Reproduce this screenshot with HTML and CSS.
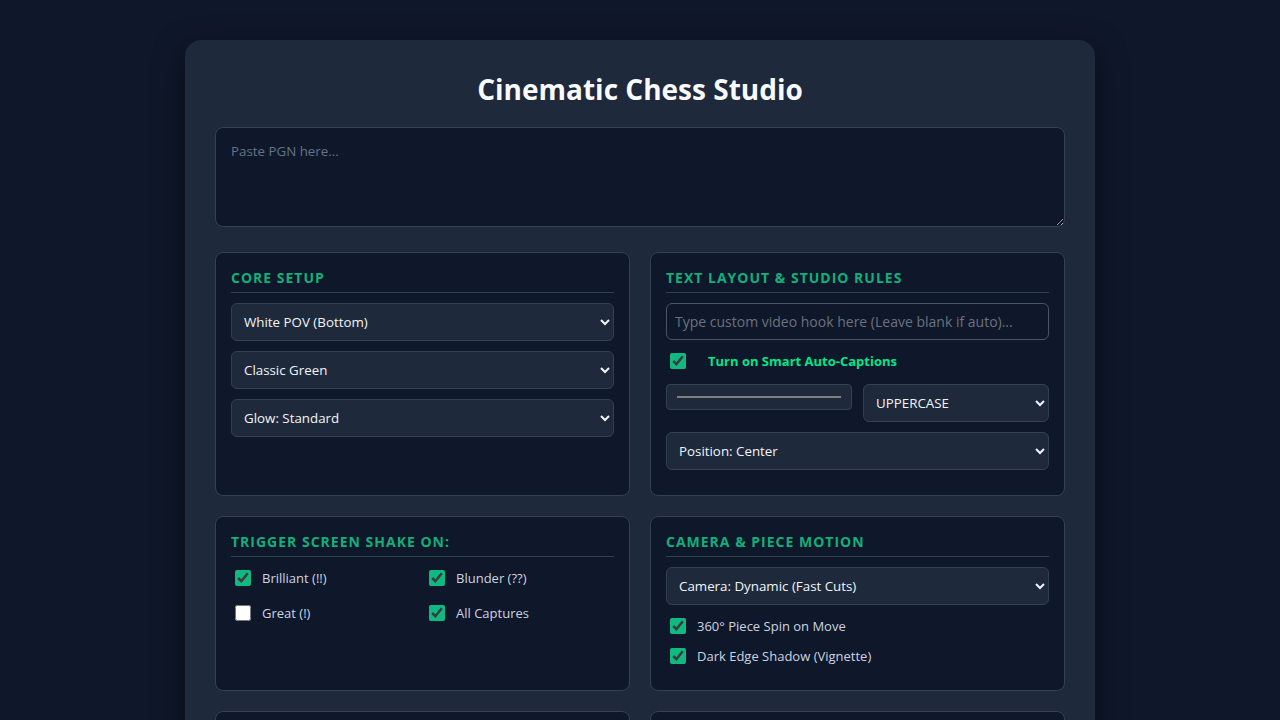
FILE: index.html
```html
<!DOCTYPE html>
<html lang="en">
<head>
  <meta charset="UTF-8" />
  <meta name="viewport" content="width=device-width, initial-scale=1.0"/>
  <title>Cinematic Chess Studio</title>
  <link rel="stylesheet" href="styles.css">
</head>
<body>
  <div class="studio">
    <h1>Cinematic Chess Studio</h1>
    <textarea class="pgn-input" placeholder="Paste PGN here..."></textarea>

    <div class="panel-grid">
      <!-- Core setup -->
      <div class="panel">
        <h3 class="panel-title">Core Setup</h3>
        <select class="field">
          <option>White POV (Bottom)</option>
          <option>Black POV (Bottom)</option>
        </select>
        <select class="field">
          <option>Classic Green</option>
          <option>Walnut Wood</option>
          <option>Midnight Blue</option>
        </select>
        <select class="field">
          <option>Glow: Standard</option>
          <option>Glow: Intense</option>
          <option>Glow: Off</option>
        </select>
      </div>

      <!-- Text layout -->
      <div class="panel">
        <h3 class="panel-title">Text Layout &amp; Studio Rules</h3>
        <input type="text" class="hook-input" placeholder="Type custom video hook here (Leave blank if auto)...">
        <label class="caption-toggle">
          <input type="checkbox" checked>
          <span>Turn on Smart Auto-Captions</span>
        </label>
        <div class="field-row">
          <div class="color-field"><span class="color-swatch"></span></div>
          <select class="field">
            <option>UPPERCASE</option>
            <option>Sentence case</option>
          </select>
        </div>
        <select class="field">
          <option>Position: Center</option>
          <option>Position: Top</option>
          <option>Position: Bottom</option>
        </select>
      </div>

      <!-- Screen shake -->
      <div class="panel">
        <h3 class="panel-title">Trigger Screen Shake On:</h3>
        <div class="check-grid">
          <label class="check"><input type="checkbox" checked> Brilliant (!!)</label>
          <label class="check"><input type="checkbox" checked> Blunder (??)</label>
          <label class="check"><input type="checkbox"> Great (!)</label>
          <label class="check"><input type="checkbox" checked> All Captures</label>
        </div>
      </div>

      <!-- Camera -->
      <div class="panel">
        <h3 class="panel-title">Camera &amp; Piece Motion</h3>
        <select class="field">
          <option>Camera: Dynamic (Fast Cuts)</option>
          <option>Camera: Static</option>
        </select>
        <label class="check stacked"><input type="checkbox" checked> 360° Piece Spin on Move</label>
        <label class="check stacked"><input type="checkbox" checked> Dark Edge Shadow (Vignette)</label>
      </div>

      <!-- Audio -->
      <div class="panel">
        <h3 class="panel-title">Audio &amp; Music</h3>
        <select class="field">
          <option>Music: Epic Orchestral</option>
        </select>
        <label class="check stacked"><input type="checkbox" checked> Move Sound Effects</label>
      </div>

      <!-- Export -->
      <div class="panel">
        <h3 class="panel-title">Export Settings</h3>
        <select class="field">
          <option>Format: 9:16 Vertical</option>
        </select>
        <select class="field">
          <option>Speed: 1.0s per move</option>
        </select>
      </div>
    </div>

    <button class="render-btn">Render Video</button>
  </div>
</body>
</html>
```

FILE: styles.css
```css
body {
  margin: 0;
  padding: 40px 20px;
  background-color: #0f172a;
  color: #f1f5f9;
  font-family: 'Open Sans', 'Noto Sans', sans-serif;
}

.studio {
  max-width: 850px;
  margin: 0 auto;
  padding: 30px;
  background-color: #1e293b;
  border-radius: 16px;
  box-shadow: 0 10px 30px rgba(0, 0, 0, 0.5);
}

h1 {
  margin: 0 0 19px;
  font-size: 28px;
  line-height: 38px;
  text-align: center;
  color: #f8fafc;
}

.pgn-input {
  display: block;
  box-sizing: border-box;
  width: 100%;
  height: 100px;
  margin: 0 0 25px;
  padding: 14px 15px;
  background-color: #0f172a;
  color: #f1f5f9;
  border: 1px solid #334155;
  border-radius: 8px;
  font-family: inherit;
  font-size: 13.33px;
  line-height: 19px;
  resize: vertical;
}

.pgn-input::placeholder {
  color: #64748b;
}

.panel-grid {
  display: grid;
  grid-template-columns: 1fr 1fr;
  gap: 20px;
}

.panel {
  padding: 15px;
  background-color: #0f172a;
  border: 1px solid #334155;
  border-radius: 8px;
}

.panel-title {
  margin: 0 0 10px;
  padding-bottom: 5px;
  border-bottom: 1px solid #334155;
  color: #10b07a;
  font-size: 14px;
  line-height: 19px;
  letter-spacing: 1px;
  text-transform: uppercase;
}

.field {
  display: block;
  box-sizing: border-box;
  width: 100%;
  height: 38px;
  margin: 0 0 10px;
  padding: 0 8px;
  background-color: #1e293b;
  color: #f1f5f9;
  border: 1px solid #334155;
  border-radius: 6px;
  font-family: inherit;
  font-size: 13.33px;
}

.hook-input {
  display: block;
  box-sizing: border-box;
  width: 100%;
  height: 37px;
  margin: 0 0 10px;
  padding: 0 8px;
  background-color: #0f172a;
  color: #f1f5f9;
  border: 1px solid #475569;
  border-radius: 6px;
  font-family: inherit;
  font-size: 14px;
}

.hook-input::placeholder {
  color: #6b7280;
}

.caption-toggle {
  display: flex;
  align-items: center;
  height: 22px;
  margin-bottom: 12px;
  color: #00e68a;
  font-size: 13px;
  font-weight: 700;
}

.caption-toggle input {
  width: 16px;
  height: 16px;
  margin: 0 22px 0 4px;
  accent-color: #10b981;
}

.field-row {
  display: grid;
  grid-template-columns: 1fr 1fr;
  align-items: start;
  gap: 11px;
}

.color-field {
  box-sizing: border-box;
  height: 26px;
  padding: 0 10px;
  display: flex;
  align-items: center;
  background-color: #1e293b;
  border: 1px solid #334155;
  border-radius: 4px;
}

.color-swatch {
  flex: 1;
  height: 2px;
  background-color: #808080;
}

.check-grid {
  display: grid;
  grid-template-columns: 1fr 1fr;
  gap: 13px 5px;
}

.check {
  display: flex;
  align-items: center;
  height: 22px;
  color: #cbd5e1;
  font-size: 13px;
}

.check input {
  width: 16px;
  height: 16px;
  margin: 0 11px 0 4px;
  accent-color: #10b981;
}

.check.stacked {
  margin-bottom: 8px;
}

.render-btn {
  display: block;
  width: 100%;
  margin-top: 20px;
  padding: 14px;
  background-color: #10b981;
  color: #0f172a;
  border: none;
  border-radius: 8px;
  font-family: inherit;
  font-size: 16px;
  font-weight: 700;
  cursor: pointer;
}
```
